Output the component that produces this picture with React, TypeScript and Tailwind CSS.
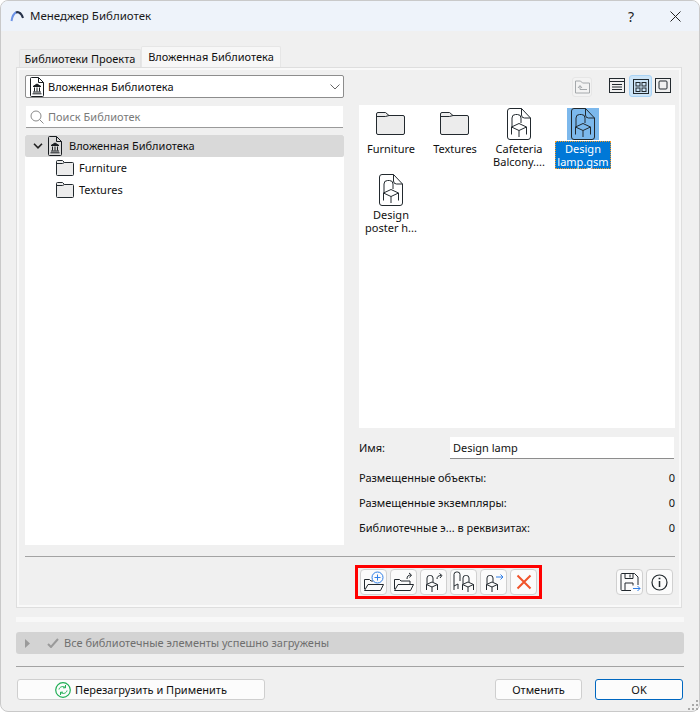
import type { ReactNode } from 'react';

const ink = '#22292e';

function FolderIcon() {
  return (
    <svg className="mr-px mb-[2px] h-[23px] w-[29px]" viewBox="0 0 29 23" fill="none" stroke={ink}>
      <path d="M.5 21V2A1.500 1.500 0 0 1 2 .5h7.500L13 3.500h14A1.500 1.500 0 0 1 28.500 5v16a1.500 1.500 0 0 1-1.500 1.500H2A1.500 1.500 0 0 1 .5 21Z" fill="#ececec" />
      <path d="M.5 4.500h9L13 3.500" />
    </svg>
  );
}

function TreeFolder() {
  return (
    <svg className="h-[16px] w-[18px] shrink-0" viewBox="0 0 18 16" fill="none" stroke={ink}>
      <path d="M.5 14.500V1.500a1 1 0 0 1 1-1h5l2 2h8a1 1 0 0 1 1 1v11a1 1 0 0 1-1 1h-15a1 1 0 0 1-1-1Z" fill="#ececec" />
      <path d="M.5 3.500h6l2-1" />
    </svg>
  );
}

function ChairDoc() {
  return (
    <svg className="h-[32px] w-[24px]" viewBox="0 0 24 32" fill="none" stroke={ink}>
      <path d="M3 .5h11.500l9 9.500v19a2.500 2.500 0 0 1-2.500 2.500H3A2.500 2.500 0 0 1 .5 29V3A2.500 2.500 0 0 1 3 .5Z" />
      <path d="M14.500.5V7a3 3 0 0 0 3 3h6" />
      <path d="M5 19V10a3.500 3.500 0 0 1 3.500-3.500h2A3.500 3.500 0 0 1 14 10v5" />
      <path d="M4.500 19 12 15.500 19.500 19 12 22.500Z" />
      <path d="M4.500 19v7.500M12 22.500V29M19.500 19v7.500" />
    </svg>
  );
}

function LibraryDoc() {
  return (
    <svg className="h-[20px] w-[14px] shrink-0" viewBox="0 0 14 20" fill="none" stroke="#181c20">
      <path d="M1.500.5h7l5 5v13a1 1 0 0 1-1 1h-11a1 1 0 0 1-1-1v-17a1 1 0 0 1 1-1Z" />
      <path d="M8.500.5v5h5" />
      <path d="M7 7 3 9.500h8Z" fill="#181c20" />
      <path d="M4.500 10.500v4M7 10.500v4M9.500 10.500v4" />
      <path d="M3 15h8M2.500 16.800h9" />
    </svg>
  );
}

function ToolButton({ children }: { children: ReactNode }) {
  return (
    <button className="flex h-[26px] w-[27px] items-center justify-center rounded-[4px] border border-[#d0d0d0] bg-[#fbfbfb]">
      {children}
    </button>
  );
}

function OpenFolder({ plus }: { plus?: boolean }) {
  return (
    <svg className="h-[22px] w-[23px]" viewBox="0 0 23 22" fill="none" stroke={ink}>
      <path d="M2.500 18V8.500h5l1.500 1.500h2" />
      <path d="M2.500 19.500 6 13.500h15.500l-3 6Z" />
      {plus ? (
        <g stroke="#2f7fe8">
          <circle cx="15.500" cy="6.500" r="5.500" fill="#fbfbfb" />
          <path d="M15.500 3.500v6M12.500 6.500h6" />
        </g>
      ) : (
        <>
          <path d="M11 10h7v3" />
          <path d="M15 8c0-3 1.500-4 4-4M17 2l2.500 2-2 2.500" />
        </>
      )}
    </svg>
  );
}

function SmallChair({ x = 0 }: { x?: number }) {
  return (
    <g transform={`translate(${x} 0)`}>
      <path d="M3 13V7a2.500 2.500 0 0 1 2.500-2.500h1A2.500 2.500 0 0 1 9 7v4" />
      <path d="M2.500 13.500 8 11l5.500 2.500L8 16Z" />
      <path d="M2.500 13.500V19M8 16v5M13.500 13.500V19" />
    </g>
  );
}

function ChairArrow({ blue }: { blue?: boolean }) {
  return (
    <svg className="h-[22px] w-[22px]" viewBox="0 0 22 22" fill="none" stroke={ink}>
      <SmallChair x={1} />
      {blue ? (
        <path d="M13 6h7M17.500 3.500 20 6l-2.500 2.500" stroke="#2f7fe8" />
      ) : (
        <path d="M14 8c0-2.500 1.500-3.500 4-3.500M16.500 2.500 19 4.500l-2 2.500" />
      )}
    </svg>
  );
}

function TwoChairs() {
  return (
    <svg className="h-[22px] w-[24px]" viewBox="0 0 24 22" fill="none" stroke={ink}>
      <path d="M2 15V3.500A2.500 2.500 0 0 1 4.500 1h1A2.500 2.500 0 0 1 8 3.500V10M2 15l4-2M2 15v4M6 13v5" />
      <SmallChair x={8} />
    </svg>
  );
}

function RedCross() {
  return (
    <svg className="h-[16px] w-[16px]" viewBox="0 0 16 16" stroke="#f0532a" strokeWidth="2">
      <path d="M1.500 1.500l13 13M14.500 1.500l-13 13" />
    </svg>
  );
}

function SaveIcon() {
  return (
    <svg className="h-[22px] w-[22px]" viewBox="0 0 22 22" fill="none" stroke={ink}>
      <path d="M12 19.500H3a1 1 0 0 1-1-1v-15a1 1 0 0 1 1-1h12.500l3.500 3.500v8" />
      <path d="M6 2.500v5h8v-5M11 3.500v3M6 19v-7h8v2.500" />
      <path d="M14 17.500h7M18.500 15l2.500 2.500-2.500 2.500" stroke="#2f7fe8" />
    </svg>
  );
}

function InfoIcon() {
  return (
    <svg className="h-[17px] w-[17px]" viewBox="0 0 17 17" fill="none" stroke={ink}>
      <circle cx="8.500" cy="8.500" r="7.500" strokeWidth="1.200" />
      <path d="M8.500 7v6" strokeWidth="1.500" />
      <path d="M8.500 3.800v1.500" strokeWidth="1.800" />
    </svg>
  );
}

function ViewToolbar() {
  return (
    <div className="flex h-[30px] items-start">
      <div className="mt-[2px] ml-[213px] flex h-[20px] w-[20px] items-center justify-center rounded-[3px] border border-[#e6e6e6] bg-[#f3f3f3]">
        <svg className="h-[14px] w-[15px]" viewBox="0 0 15 14" fill="none" stroke="#a4a8ab">
          <path d="M.5 13V1h5l2 2h7v10Z" />
          <path d="M12 9.500H5V6M3 8l2-2.500L7 8" />
        </svg>
      </div>
      <svg className="mt-[3px] ml-[17px] h-[15px] w-[16px]" viewBox="0 0 16 15" fill="none" stroke={ink}>
        <rect x=".5" y=".5" width="15" height="14" />
        <path d="M.5 3.500h15M3 6.500h10M3 9h10M3 11.500h10" />
      </svg>
      <div className="ml-[4px] flex h-[22px] w-[23px] items-center justify-center rounded-[3px] border border-[#a9d3f5] bg-[#cce4f7]">
        <svg className="h-[15px] w-[16px]" viewBox="0 0 16 15" fill="none" stroke={ink}>
          <rect x=".5" y=".5" width="15" height="14" />
          <rect x="3" y="3.500" width="4" height="3.500" />
          <rect x="9" y="3.500" width="4" height="3.500" />
          <rect x="3" y="9" width="4" height="3.500" />
          <rect x="9" y="9" width="4" height="3.500" />
        </svg>
      </div>
      <svg className="mt-[3px] ml-[3px] h-[15px] w-[16px]" viewBox="0 0 16 15" fill="none" stroke={ink}>
        <rect x=".5" y=".5" width="15" height="14" />
        <rect x="4" y="3" width="8" height="8" rx="1" />
      </svg>
    </div>
  );
}

function GridItem({ label, folder, selected }: { label: string; folder?: boolean; selected?: boolean }) {
  return (
    <div className="flex h-[66px] w-[64px] flex-col items-center pt-[3px]">
      <div className={`flex h-[32px] w-[32px] items-center justify-center ${selected ? 'bg-[#7cb8ec]' : ''}`}>
        {folder ? <FolderIcon /> : <ChairDoc />}
      </div>
      <div
        className={`whitespace-pre-line text-center leading-[13px] ${
          selected
            ? 'mt-[1px] border border-dotted border-[#f59a23] bg-[#0078d7] px-px text-white'
            : 'mt-[2px] text-[#101010]'
        }`}
      >
        {label}
      </div>
    </div>
  );
}

function StatRow({ label }: { label: string }) {
  return (
    <div className="flex h-[25px] items-center justify-between text-[#111]">
      <span>{label}</span>
      <span>0</span>
    </div>
  );
}

export default function App() {
  return (
    <div className="relative h-[712px] w-[700px] bg-white font-['Noto_Sans',sans-serif] text-[11px] text-[#111]">
      <div className="flex h-full flex-col overflow-hidden rounded-[8px] border border-[#c9c9c9] bg-[#f0f0f0]">
        <div className="flex h-[30px] shrink-0 items-center bg-[#eef3fa] pr-[18px] pl-[9px]">
          <svg className="h-[14px] w-[15px]" viewBox="0 0 15 14" fill="none">
            <path d="M1.500 12C2.200 7 4 4.200 6.500 3.200" stroke="#6d93e6" strokeWidth="2" />
            <path d="M6 3.500C7 3 8 3 9 3.500c2 .8 3.200 2.800 4 5.500" stroke="#27324a" strokeWidth="2" />
          </svg>
          <span className="ml-[5px] text-[11.500px] text-[#1a1a1a]">Менеджер Библиотек</span>
          <span className="mr-[36px] ml-auto text-[14px] text-[#222]">?</span>
          <svg className="h-[11px] w-[11px]" viewBox="0 0 11 11" stroke="#222">
            <path d="M.5.5l10 10M10.500.5l-10 10" />
          </svg>
        </div>

        <div className="flex min-h-0 flex-1 flex-col px-[15px]">
          <div className="mt-[15px] flex h-[21px] items-end pl-[3px]">
            <div className="flex h-[18px] w-[122px] items-center justify-center rounded-t-[2px] border border-b-0 border-[#e3e3e3] bg-[#ececec] pt-px text-[#111]">
              Библиотеки Проекта
            </div>
            <div className="flex h-[21px] w-[140px] items-center justify-center rounded-t-[2px] border border-b-0 border-[#e6e6e6] bg-[#f7f7f7] text-[#111]">
              Вложенная Библиотека
            </div>
          </div>

          <div className="flex h-[541px] w-[666px] flex-col border border-[#dedede] bg-[#f0f0f0]">
            <div className="flex flex-1 flex-col border-2 border-[#f9f9f9] pt-[5px] pr-[4px] pl-[6px]">
              <div className="flex gap-[15px]">
                <div className="flex w-[319px] flex-col">
                  <div className="flex h-[23px] items-center rounded-[2px] border border-[#8d8d8d] bg-white pr-[3px] pl-[4px]">
                    <LibraryDoc />
                    <span className="mt-px ml-[4px] text-[#111]">Вложенная Библиотека</span>
                    <svg className="ml-auto h-[6px] w-[10px]" viewBox="0 0 10 6" fill="none" stroke="#666">
                      <path d="M.5.5 5 5 9.500.5" />
                    </svg>
                  </div>
                  <div className="mx-px mt-[8px] flex h-[22px] items-center border-b border-[#9a9a9a] bg-white pl-[4px]">
                    <svg className="h-[14px] w-[14px]" viewBox="0 0 14 14" fill="none" stroke="#8a8a8a">
                      <circle cx="6" cy="6" r="5" />
                      <path d="m9.500 9.500 4 4" />
                    </svg>
                    <span className="mt-px ml-[4px] text-[#7a7a7a]">Поиск Библиотек</span>
                  </div>
                  <div className="mt-[7px] h-[410px] bg-white">
                    <div className="flex h-[22px] items-center rounded-[2px] bg-[#d9d9d9] pl-[8px]">
                      <svg className="h-[6px] w-[10px]" viewBox="0 0 10 6" fill="none" stroke="#222" strokeWidth="1.600">
                        <path d="M1 .8 5 4.800 9 .8" />
                      </svg>
                      <span className="ml-[5px]">
                        <LibraryDoc />
                      </span>
                      <span className="ml-[7px]">Вложенная Библиотека</span>
                    </div>
                    <div className="flex h-[22px] items-center pl-[31px]">
                      <TreeFolder />
                      <span className="ml-[5px]">Furniture</span>
                    </div>
                    <div className="flex h-[22px] items-center pl-[31px]">
                      <TreeFolder />
                      <span className="ml-[5px]">Textures</span>
                    </div>
                  </div>
                </div>

                <div className="flex w-[316px] flex-col">
                  <ViewToolbar />
                  <div className="flex h-[323px] w-[316px] flex-wrap content-start bg-white">
                    <GridItem folder label="Furniture" />
                    <GridItem folder label="Textures" />
                    <GridItem label={'Cafeteria\nBalcony....'} />
                    <GridItem selected label={'Design\nlamp.gsm'} />
                    <GridItem label={'Design\nposter h...'} />
                  </div>
                  <div className="mt-[9px] flex h-[22px] items-center">
                    <span className="w-[91px]">Имя:</span>
                    <div className="flex h-[22px] w-[224px] items-center border-b border-[#8d8d8d] bg-white pt-px pl-[3px]">
                      Design lamp
                    </div>
                  </div>
                  <div className="mt-[7px]">
                    <StatRow label="Размещенные объекты:" />
                    <StatRow label="Размещенные экземпляры:" />
                    <StatRow label="Библиотечные э... в реквизитах:" />
                  </div>
                </div>
              </div>

              <div className="mt-[11px] h-px w-[650px] bg-[#a3a3a3]" />

              <div className="mt-[8px] flex h-[34px] items-center">
                <div className="ml-[330px] flex h-[34px] items-center gap-[3px] border-[3px] border-[#ff0000] px-[2px]">
                  <ToolButton><OpenFolder plus /></ToolButton>
                  <ToolButton><OpenFolder /></ToolButton>
                  <ToolButton><ChairArrow /></ToolButton>
                  <ToolButton><TwoChairs /></ToolButton>
                  <ToolButton><ChairArrow blue /></ToolButton>
                  <ToolButton><RedCross /></ToolButton>
                </div>
                <div className="ml-[74px] flex gap-[3px]">
                  <ToolButton><SaveIcon /></ToolButton>
                  <ToolButton><InfoIcon /></ToolButton>
                </div>
              </div>
            </div>
          </div>

          <div className="mt-[9px] h-[5px] w-[668px] bg-[#f8f8f8]" />

          <div className="mt-[10px] flex h-[22px] w-[668px] items-center rounded-[3px] bg-[#d3d3d3] pl-[9px] text-[#6f6f6f]">
            <svg className="h-[9px] w-[5px]" viewBox="0 0 5 9" fill="#9a9a9a">
              <path d="M0 0l5 4.500L0 9Z" />
            </svg>
            <svg className="ml-[17px] h-[10px] w-[12px]" viewBox="0 0 12 10" fill="none" stroke="#9a9a9a" strokeWidth="2">
              <path d="M1 6l3 3 7-8" />
            </svg>
            <span className="mt-px ml-[5px]">Все библиотечные элементы успешно загружены</span>
          </div>

          <div className="mt-[12px] h-px w-[668px] bg-[#a3a3a3]" />

          <div className="mt-[12px] flex h-[21px] w-[668px] pl-px">
            <button className="flex h-[21px] w-[248px] items-center justify-center rounded-[3px] border border-[#cfcfcf] bg-[#fcfcfc] pt-px text-[#111]">
              <svg className="mr-[4px] h-[16px] w-[16px]" viewBox="0 0 16 16" fill="none" stroke="#1fae54">
                <circle cx="8" cy="8" r="7.300" strokeWidth="1.200" />
                <path d="M4 7.500C4.500 5 7.500 3.500 10.500 5.500M10.500 3v2.800H8M12 8.500c-.5 2.500-3.500 4-6.500 2M5.500 13v-2.800H8" />
              </svg>
              Перезагрузить и Применить
            </button>
            <button className="ml-[230px] h-[21px] w-[87px] rounded-[3px] border border-[#cfcfcf] bg-[#fcfcfc] pt-px text-[#111]">
              Отменить
            </button>
            <button className="ml-[13px] h-[21px] w-[88px] rounded-[3px] border border-[#0067c0] bg-[#fcfcfc] pt-px text-[#111]">
              OK
            </button>
          </div>
        </div>
      </div>
      <svg className="absolute right-[2px] bottom-[2px] h-[10px] w-[10px]" viewBox="0 0 10 10" fill="#a8a8a8">
        <path d="M8 0h2v2H8ZM4 4h2v2H4ZM8 4h2v2H8ZM0 8h2v2H0ZM4 8h2v2H4ZM8 8h2v2H8Z" />
      </svg>
    </div>
  );
}
